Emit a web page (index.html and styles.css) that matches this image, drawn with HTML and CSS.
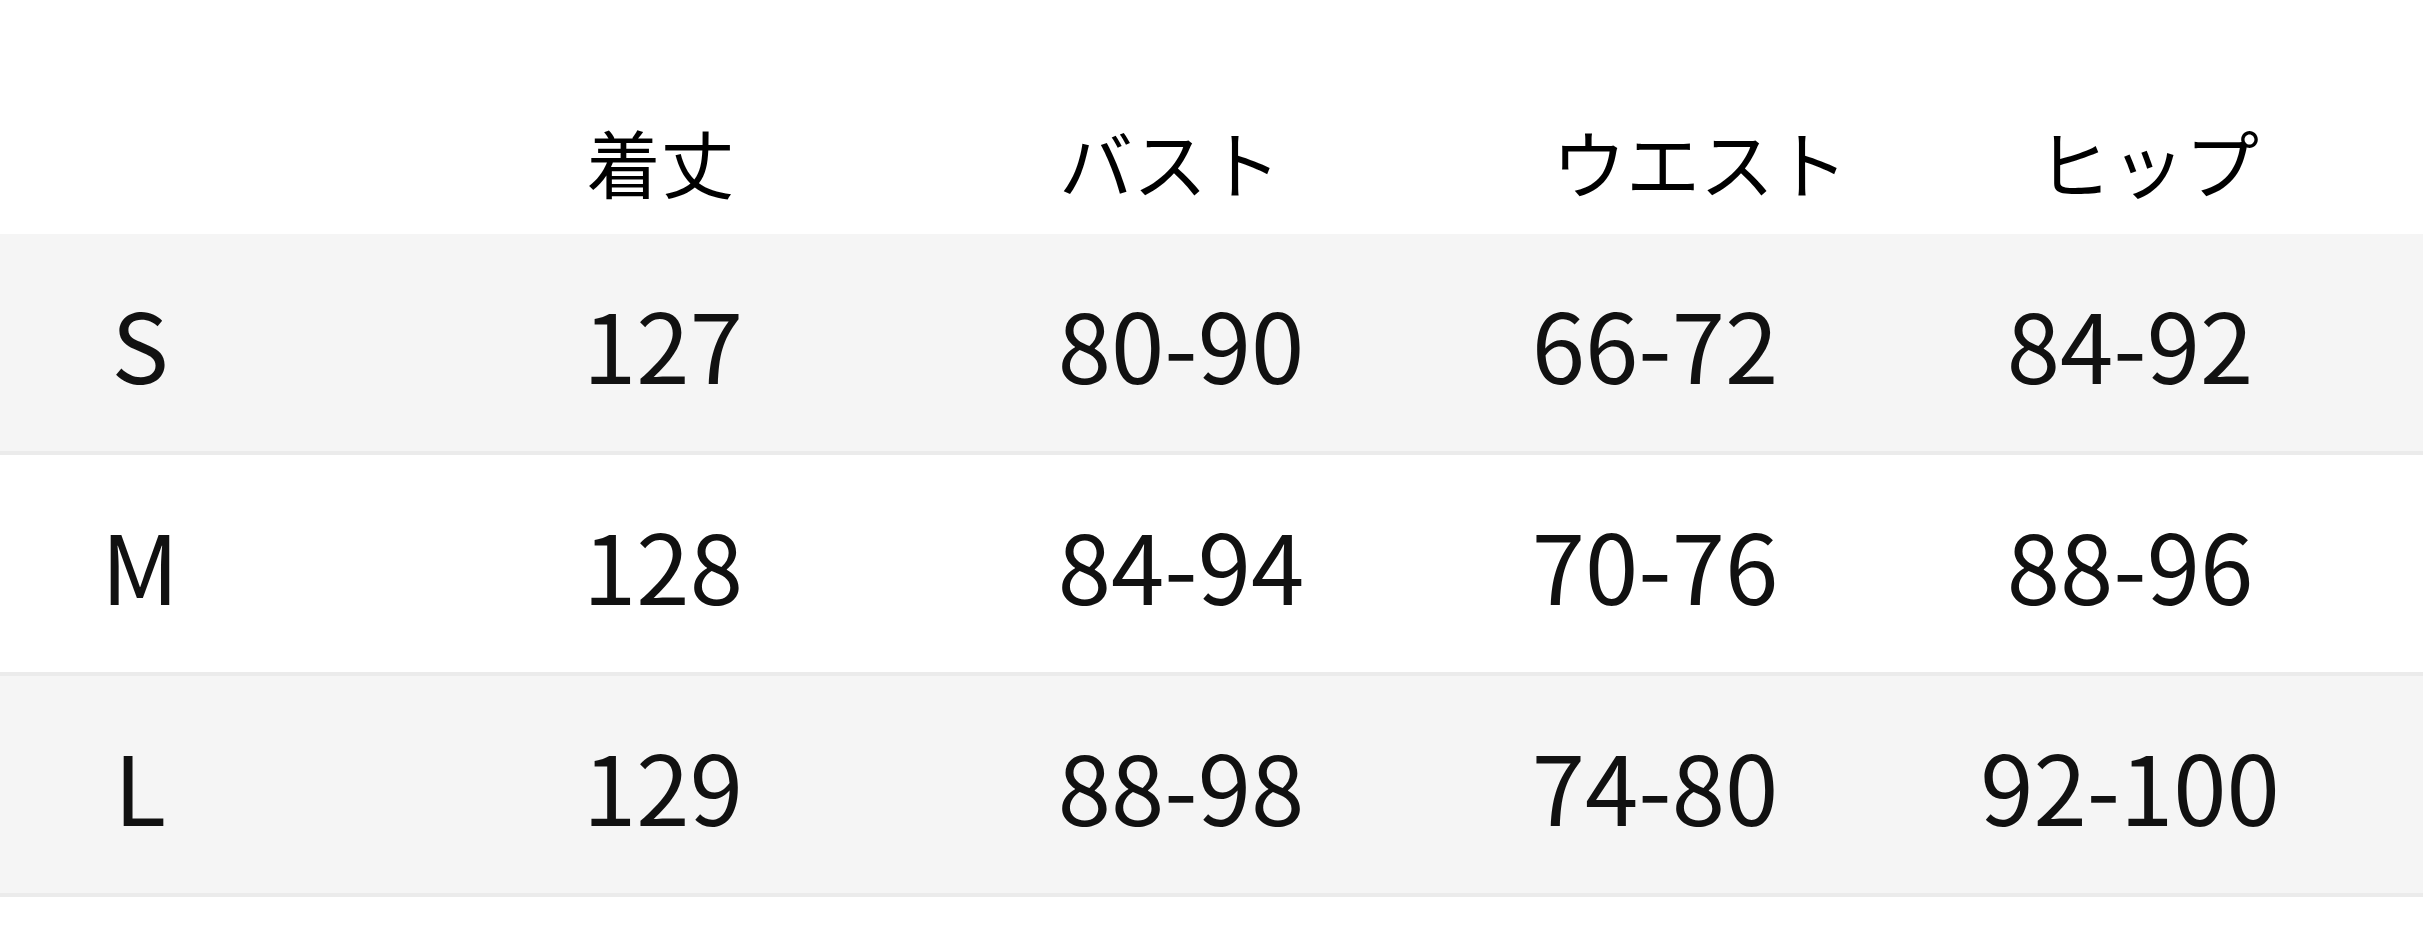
FILE: index.html
```html
<!DOCTYPE html>
<html lang="ja">
<head>
<meta charset="utf-8">
<title>サイズ表</title>
<link rel="stylesheet" href="styles.css">
</head>
<body>
<div class="size-table">
  <div class="row head">
    <div class="cell"></div>
    <div class="cell h2">着丈</div>
    <div class="cell h3">バスト</div>
    <div class="cell h4">ウエスト</div>
    <div class="cell h5">ヒップ</div>
    <div class="cell"></div>
  </div>
  <div class="row body shaded">
    <div class="cell label">S</div>
    <div class="cell">127</div>
    <div class="cell">80-90</div>
    <div class="cell">66-72</div>
    <div class="cell">84-92</div>
    <div class="cell"></div>
  </div>
  <div class="row body">
    <div class="cell label">M</div>
    <div class="cell">128</div>
    <div class="cell">84-94</div>
    <div class="cell">70-76</div>
    <div class="cell">88-96</div>
    <div class="cell"></div>
  </div>
  <div class="row body shaded">
    <div class="cell label">L</div>
    <div class="cell">129</div>
    <div class="cell">88-98</div>
    <div class="cell">74-80</div>
    <div class="cell">92-100</div>
    <div class="cell"></div>
  </div>
</div>
</body>
</html>
```

FILE: styles.css
```css
html, body {
  margin: 0;
  padding: 0;
  background: #ffffff;
}

body {
  font-family: "Noto Sans CJK JP", "Noto Sans", sans-serif;
  color: #111111;
  width: 2423px;
  height: 950px;
  overflow: hidden;
}

.size-table {
  display: flex;
  flex-direction: column;
}

.row {
  display: grid;
  grid-template-columns: 280px 766px 270px 678px 272px 1fr;
}

.cell {
  display: flex;
  justify-content: center;
  align-items: center;
  white-space: nowrap;
  line-height: 1;
}

.head {
  height: 234px;
  box-sizing: border-box;
  padding-top: 124px;
  font-size: 74px;
  color: #000000;
}

.head .cell {
  align-items: flex-start;
}

.h2 { padding-right: 5px; }
.h3 { padding-right: 22px; }
.h4 { padding-left: 90px; }
.h5 { padding-left: 36px; }

.body {
  height: 221px;
  box-sizing: border-box;
  border-bottom: 4px solid #ebebeb;
  font-size: 96px;
  padding-top: 0;
}

.shaded {
  background: #f5f5f5;
}
```
